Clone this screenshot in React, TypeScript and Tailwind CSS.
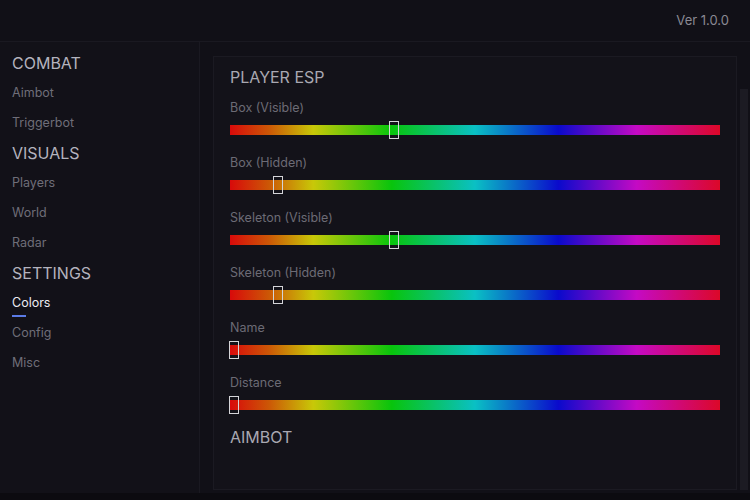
import React from "react";

const sections = [
  { title: "COMBAT", items: ["Aimbot", "Triggerbot"] },
  { title: "VISUALS", items: ["Players", "World", "Radar"] },
  { title: "SETTINGS", items: ["Colors", "Config", "Misc"] },
];

const sliders = [
  { label: "Box (Visible)", pos: 164 },
  { label: "Box (Hidden)", pos: 48 },
  { label: "Skeleton (Visible)", pos: 164 },
  { label: "Skeleton (Hidden)", pos: 48 },
  { label: "Name", pos: 4 },
  { label: "Distance", pos: 4 },
];

const hue =
  "linear-gradient(to right, #d80a0a 0%, #cc5806 8%, #c8c808 17%, #08c40c 33%, #0ac0c4 50%, #0a0acc 67%, #c40ac4 83%, #dc0828 100%)";

function HueSlider({ pos }: { pos: number }) {
  return (
    <div className="relative h-[10px] w-[490px]" style={{ background: hue }}>
      <div
        className="absolute top-[-4px] h-[18px] w-[10px] border-[1.5px] border-[#d4d4d8] bg-transparent"
        style={{ left: pos - 5 }}
      />
    </div>
  );
}

export default function App() {
  return (
    <div
      className="flex h-[500px] w-[750px] flex-col overflow-hidden bg-[#111017] text-[#a9a8b2]"
      style={{ fontFamily: "Inter, 'Noto Sans', sans-serif" }}
    >
      <header className="flex h-[42px] shrink-0 items-center justify-end border-b border-[#1a1921] pr-[21px]">
        <span className="text-[13px] text-[#8a8993]">Ver 1.0.0</span>
      </header>
      <div className="flex min-h-0 flex-1">
        <aside className="w-[200px] shrink-0 border-r border-[#1a1921] bg-[#121118] pl-[12px] pt-[6px]">
          {sections.map((s) => (
            <div key={s.title}>
              <div className="flex h-[30px] items-center text-[16px] text-[#b4b3be]">{s.title}</div>
              {s.items.map((it) => (
                <div key={it} className="relative flex h-[30px] items-center text-[12.5px]">
                  <span className={it === "Colors" ? "text-[#ececf2]" : "text-[#6f6e78]"}>{it}</span>
                  {it === "Colors" && (
                    <div className="absolute left-0 top-[27px] h-[2px] w-[14px] bg-[#5b7be6]" />
                  )}
                </div>
              ))}
            </div>
          ))}
        </aside>
        <main className="flex min-w-0 flex-1 bg-[#111017] pb-[3px] pl-[13px] pt-[14px]">
          <section className="w-[524px] border border-[#1b1a22] bg-[#131219] pl-[16px] pt-[8px]">
            <h2 className="flex h-[24px] items-center text-[16px] text-[#a9a8b2]">PLAYER ESP</h2>
            {sliders.map((s) => (
              <div key={s.label} className="flex h-[55px] flex-col pt-[10px]">
                <div className="flex h-[18px] items-center text-[12.5px] text-[#6c6b75]">{s.label}</div>
                <div className="mt-[8px]">
                  <HueSlider pos={s.pos} />
                </div>
              </div>
            ))}
            <h2 className="mt-[6px] flex h-[24px] items-center text-[16px] text-[#a9a8b2]">AIMBOT</h2>
          </section>
          <div className="ml-[3px] mt-[33px] w-[8px] bg-[#1c1b23]" />
        </main>
      </div>
      <div className="h-[7px] shrink-0 bg-[#0c0b10]" />
    </div>
  );
}
